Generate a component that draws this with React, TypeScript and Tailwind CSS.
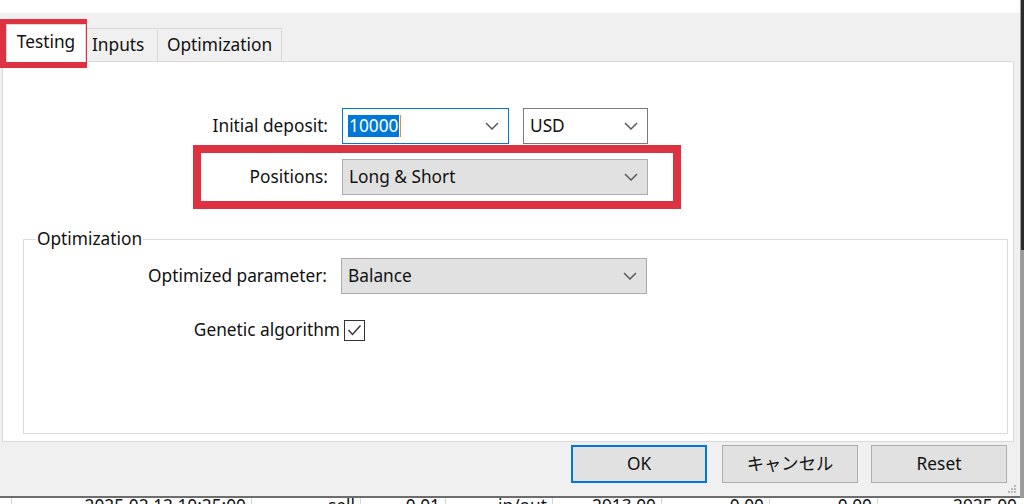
import React from "react";

const Chevron = () => (
  <svg width="14" height="8" viewBox="0 0 14 8" className="shrink-0">
    <polyline points="1,1 7,7 13,1" fill="none" stroke="#5a5a5a" strokeWidth="1.5" />
  </svg>
);

const cells: { w: number; t: string }[] = [
  { w: 12, t: "" },
  { w: 240, t: "2025.02.12 10:25:00" },
  { w: 109, t: "sell" },
  { w: 85, t: "0.01" },
  { w: 107, t: "in/out" },
  { w: 109, t: "2913.00" },
  { w: 108, t: "0.00" },
  { w: 108, t: "0.00" },
];

export default function App() {
  return (
    <div className="relative w-[1024px] h-[504px] overflow-hidden bg-white text-[17.3px] text-[#111] font-['Noto_Sans',sans-serif]">
      <div className="flex h-[498px]">
        <div className="w-[1020px] flex flex-col">
          <div className="h-[13px] bg-white" />
          <div className="relative flex-1 bg-[#f0f0f0] flex flex-col border-b-2 border-[#6d6d6d]">
            {/* tabs */}
            <div className="h-[48px] flex items-end pl-[6px]">
              <div className="relative z-10 -mb-px h-[38px] w-[80px] bg-white border border-b-0 border-[#d9d9d9] flex items-center justify-center pb-[3px]">
                Testing
              </div>
              <div className="h-[33px] w-[72px] bg-[#f0f0f0] border border-l-0 border-b-0 border-[#d9d9d9] flex items-center pl-[6px]">
                Inputs
              </div>
              <div className="h-[33px] w-[124px] bg-[#f0f0f0] border border-l-0 border-b-0 border-[#d9d9d9] flex items-center pl-[9px]">
                Optimization
              </div>
            </div>
            {/* panel */}
            <div className="ml-[2px] w-[1012px] h-[381px] bg-white border border-[#d9d9d9] flex flex-col pt-[46px]">
              <div className="flex items-center h-[36px]">
                <div className="w-[325px] text-right">Initial deposit:</div>
                <div className="ml-[14px] w-[167px] h-[36px] border border-[#0078d7] bg-white flex items-center justify-between pl-[5px] pr-[9px]">
                  <span className="relative bg-[#0078d7] text-white leading-[22px] px-[1px]">
                    10000
                    <span className="absolute right-[-2px] top-0 h-[22px] w-px bg-[#f08a24]" />
                  </span>
                  <Chevron />
                </div>
                <div className="ml-[14px] w-[125px] h-[36px] border border-[#7a7a7a] bg-white flex items-center justify-between pl-[6px] pr-[9px]">
                  <span>USD</span>
                  <Chevron />
                </div>
              </div>
              <div className="flex items-center h-[36px] mt-[15px]">
                <div className="w-[325px] text-right">Positions:</div>
                <div className="ml-[14px] w-[306px] h-[36px] border border-[#adadad] bg-[#e1e1e1] flex items-center justify-between pl-[6px] pr-[9px]">
                  <span>Long &amp; Short</span>
                  <Chevron />
                </div>
              </div>
              {/* group */}
              <div className="relative ml-[20px] mt-[44px] w-[985px] h-[195px] border border-[#dcdcdc] flex flex-col pt-[18px]">
                <span className="absolute left-[12px] top-[-12px] bg-white px-[1px] leading-[22px]">Optimization</span>
                <div className="flex items-center h-[36px]">
                  <div className="w-[303px] text-right">Optimized parameter:</div>
                  <div className="ml-[14px] w-[306px] h-[36px] border border-[#adadad] bg-[#e1e1e1] flex items-center justify-between pl-[6px] pr-[9px]">
                    <span>Balance</span>
                    <Chevron />
                  </div>
                </div>
                <div className="flex items-center mt-[25px] h-[22px]">
                  <div className="w-[316px] text-right">Genetic algorithm</div>
                  <div className="ml-[4px] w-[21px] h-[21px] border border-[#333] bg-white flex items-center justify-center">
                    <svg width="15" height="12" viewBox="0 0 15 12">
                      <polyline points="1.5,6 5.5,10.5 13.5,1.5" fill="none" stroke="#333" strokeWidth="1.4" />
                    </svg>
                  </div>
                </div>
              </div>
            </div>
            {/* buttons */}
            <div className="flex mt-[3px] pl-[571px]">
              <button className="w-[136px] h-[38px] border-2 border-[#0078d7] bg-[#e1e1e1] flex items-center justify-center">OK</button>
              <button className="ml-[15px] w-[136px] h-[38px] border border-[#adadad] bg-[#e1e1e1] flex items-center justify-center font-['Noto_Sans','Noto_Sans_CJK_JP',sans-serif]">キャンセル</button>
              <button className="ml-[13px] w-[136px] h-[38px] border border-[#adadad] bg-[#e1e1e1] flex items-center justify-center">Reset</button>
            </div>
            {/* grip */}
            <svg className="absolute right-[3px] bottom-[2px]" width="10" height="10" viewBox="0 0 10 10">
              <rect x="7" y="1" width="2" height="2" fill="#b8b8b8" />
              <rect x="4" y="4" width="2" height="2" fill="#b8b8b8" />
              <rect x="7" y="4" width="2" height="2" fill="#b8b8b8" />
              <rect x="1" y="7" width="2" height="2" fill="#b8b8b8" />
              <rect x="4" y="7" width="2" height="2" fill="#b8b8b8" />
              <rect x="7" y="7" width="2" height="2" fill="#b8b8b8" />
            </svg>
          </div>
        </div>
        <div className="w-[4px] flex flex-col border-l border-[#a0a0a0]">
          <div className="h-[250px] bg-[#2b2b2b]" />
          <div className="flex-1 bg-[#9a9a9a]" />
        </div>
      </div>
      {/* table row peeking */}
      <div className="flex h-[6px] bg-white overflow-hidden leading-[16px]">
        {cells.map((c, i) => (
          <div key={i} style={{ width: c.w }} className="shrink-0 border-r border-[#d4d4d4] text-right pr-[5px]">
            {c.t}
          </div>
        ))}
        <div className="flex-1 pl-[75px]">2925.00</div>
      </div>
      {/* annotations */}
      <div className="absolute left-0 top-[19px] w-[87px] h-[49px] border-[8px] border-[#dc3242]" />
      <div className="absolute left-[193px] top-[145px] w-[488px] h-[64px] border-[8px] border-[#dc3242]" />
    </div>
  );
}
